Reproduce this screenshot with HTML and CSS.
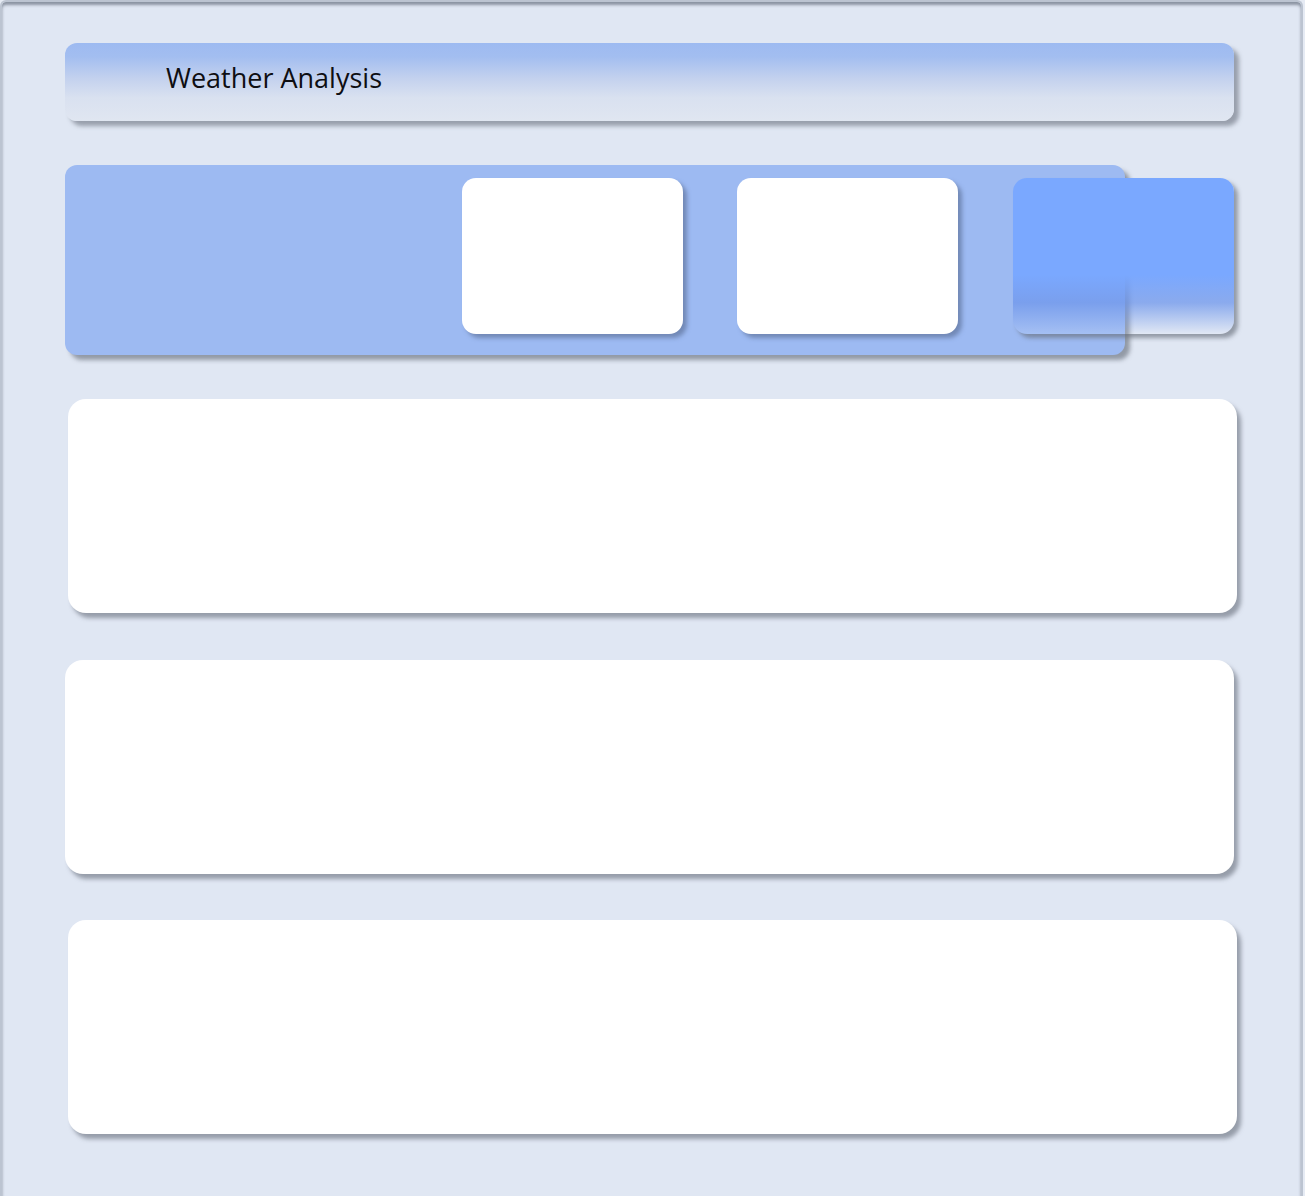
FILE: index.html
```html
<!DOCTYPE html>
<html>
<head>
<meta charset="utf-8">
<title>Weather Analysis</title>
<link rel="stylesheet" href="styles.css">
</head>
<body>
<div class="frame">
  <header class="title-bar"><h1 class="title">Weather Analysis</h1></header>
  <section class="stats-panel">
    <div class="stats-row">
      <div class="stat-card"></div>
      <div class="stat-card"></div>
      <div class="stat-card stat-card--accent"></div>
    </div>
  </section>
  <section class="content-card content-card--shift"></section>
  <section class="content-card"></section>
  <section class="content-card content-card--shift content-card--last"></section>
</div>
</body>
</html>
```
FILE: styles.css
```css
html, body {
  margin: 0;
  padding: 0;
  background: #e6ebf4;
  height: 100%;
  overflow: hidden;
}
.frame {
  box-sizing: border-box;
  width: 1303px;
  height: 1210px;
  background: #e0e7f3;
  border: 2px solid #bcc4d1;
  border-bottom: none;
  border-radius: 6px 6px 0 0;
  box-shadow: inset 0 3px 3px rgba(70, 78, 95, 0.55);
  padding: 41px 0 0 63px;
  font-family: "Open Sans", "Noto Sans", sans-serif;
}
.title-bar {
  box-sizing: border-box;
  width: 1169px;
  height: 78px;
  border-radius: 12px;
  background: linear-gradient(to bottom, #9dbaf1 0%, #a3bef0 18%, #c3d1ee 45%, #d9e1f0 70%, #e0e6f1 100%);
  box-shadow: 5px 5px 4px rgba(105, 112, 125, 0.6);
  padding: 0 0 0 101px;
  display: flex;
  align-items: center;
}
.title {
  margin: 0 0 9px 0;
  font-size: 27px;
  font-weight: 400;
  color: #0e0e12;
  letter-spacing: 0;
}
.stats-panel {
  box-sizing: border-box;
  width: 1060px;
  height: 190px;
  margin-top: 44px;
  border-radius: 12px;
  background: #9dbaf2;
  box-shadow: 5px 5px 4px rgba(105, 112, 125, 0.65);
  padding: 13px 0 0 397px;
}
.stats-row {
  display: flex;
  gap: 54px;
  width: 772px;
}
.stat-card {
  flex: 0 0 221px;
  height: 156px;
  border-radius: 14px;
  background: #ffffff;
  box-shadow: 4px 4px 4px rgba(90, 110, 150, 0.65);
}
.stat-card + .stat-card + .stat-card {
  margin-left: 1px;
}
.stat-card--accent {
  background: linear-gradient(to bottom, #7aa8ff 0%, #7aa8ff 62%, rgba(110, 150, 235, 0.75) 80%, rgba(235, 240, 250, 0.1) 100%);
  box-shadow: 4px 4px 4px rgba(105, 112, 125, 0.65);
}
.content-card {
  box-sizing: border-box;
  width: 1169px;
  height: 214px;
  margin-top: 47px;
  border-radius: 18px;
  background: #ffffff;
  box-shadow: 4px 5px 4px rgba(105, 112, 125, 0.62);
}
.content-card--shift {
  margin-left: 3px;
}
.stats-panel + .content-card {
  margin-top: 44px;
}
.content-card--last {
  margin-top: 46px;
}
```
